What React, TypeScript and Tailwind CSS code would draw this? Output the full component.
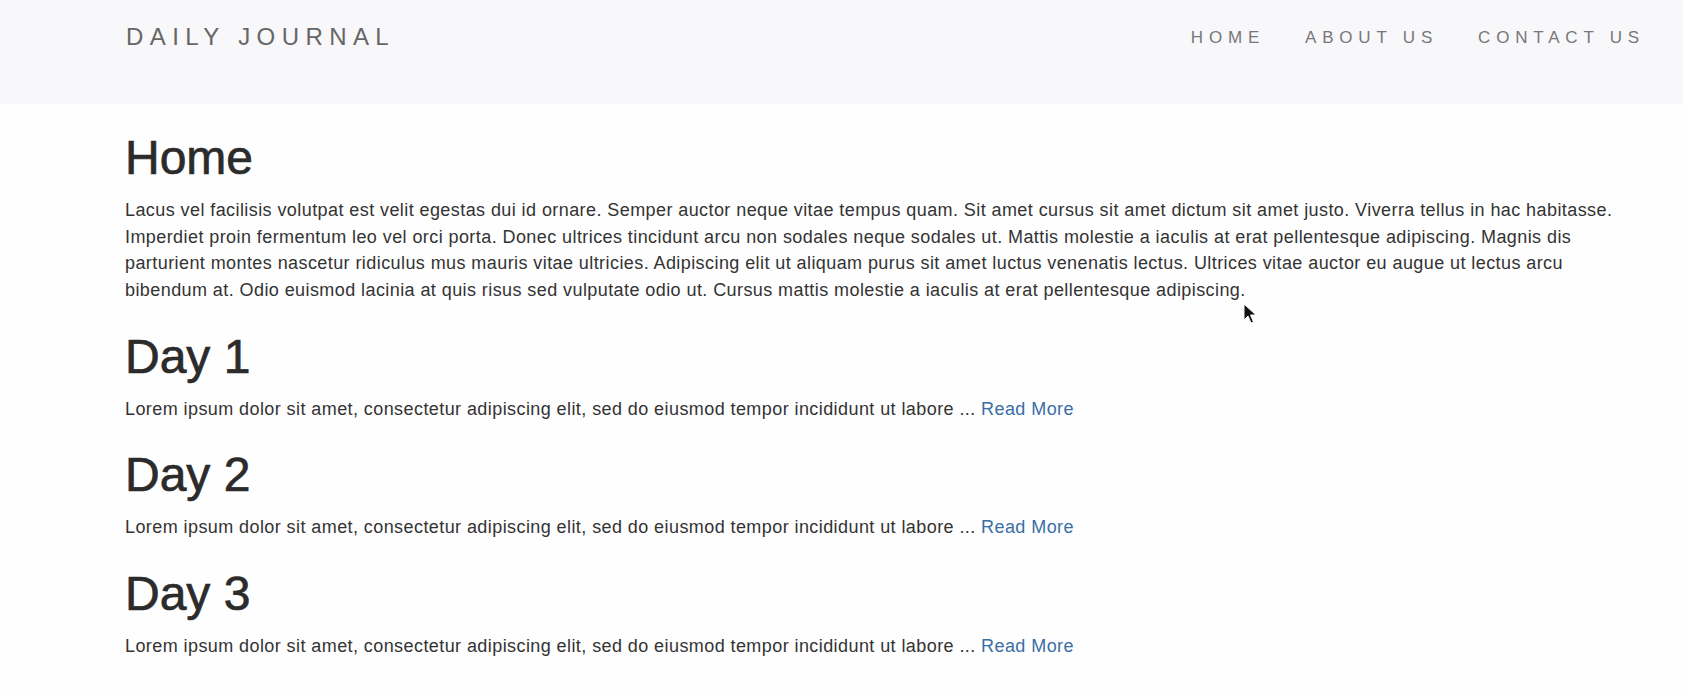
const posts = [
  { id: 1, title: 'Day 1' },
  { id: 2, title: 'Day 2' },
  { id: 3, title: 'Day 3' },
]

const excerpt =
  'Lorem ipsum dolor sit amet, consectetur adipiscing elit, sed do eiusmod tempor incididunt ut labore ...'

const homeText =
  'Lacus vel facilisis volutpat est velit egestas dui id ornare. Semper auctor neque vitae tempus quam. Sit amet cursus sit amet dictum sit amet justo. Viverra tellus in hac habitasse. Imperdiet proin fermentum leo vel orci porta. Donec ultrices tincidunt arcu non sodales neque sodales ut. Mattis molestie a iaculis at erat pellentesque adipiscing. Magnis dis parturient montes nascetur ridiculus mus mauris vitae ultricies. Adipiscing elit ut aliquam purus sit amet luctus venenatis lectus. Ultrices vitae auctor eu augue ut lectus arcu bibendum at. Odio euismod lacinia at quis risus sed vulputate odio ut. Cursus mattis molestie a iaculis at erat pellentesque adipiscing.'

function Cursor() {
  return (
    <svg
      className="pointer-events-none absolute left-[1243px] top-[303px]"
      width="14"
      height="22"
      viewBox="0 0 14 22"
    >
      <path
        d="M1 1 L1 17 L5 13 L8 20 L10.5 19 L7.5 12 L13 12 Z"
        fill="#111"
        stroke="#fff"
        strokeWidth="1"
        strokeLinejoin="round"
      />
    </svg>
  )
}

export default function App() {
  return (
    <div className="relative min-h-[696px] bg-[#fefefe] font-['Liberation_Sans',Arial,sans-serif] text-[#333]">
      <header className="flex h-[104px] items-start justify-between bg-[#f8f7fa] pl-[126px] pr-[38px]">
        <a className="mt-[25px] text-[24px] uppercase leading-[24px] tracking-[6.4px] text-[#666]">
          Daily Journal
        </a>
        <nav className="mt-[29px] flex gap-[40px] text-[17px] uppercase leading-[17px] tracking-[5.8px] text-[#777]">
          <a>Home</a>
          <a>About Us</a>
          <a>Contact Us</a>
        </nav>
      </header>

      <main className="pl-[125px] pr-[44px]">
        <section className="mt-[30px]">
          <h1 className="text-[48px] leading-[48px] text-[#2b2b2b] [-webkit-text-stroke:0.7px_#2b2b2b]">
            Home
          </h1>
          <p className="mt-[15px] text-[18px] leading-[26.67px] tracking-[0.42px]">{homeText}</p>
        </section>

        {posts.map((p) => (
          <section key={p.id} className="mt-[29px]">
            <h1 className="text-[48px] leading-[48px] text-[#2b2b2b] [-webkit-text-stroke:0.7px_#2b2b2b]">
              {p.title}
            </h1>
            <p className="mt-[15px] text-[18px] leading-[26.67px] tracking-[0.42px]">
              {excerpt} <a className="text-[#3a6ea6]">Read More</a>
            </p>
          </section>
        ))}
      </main>

      <Cursor />
    </div>
  )
}
